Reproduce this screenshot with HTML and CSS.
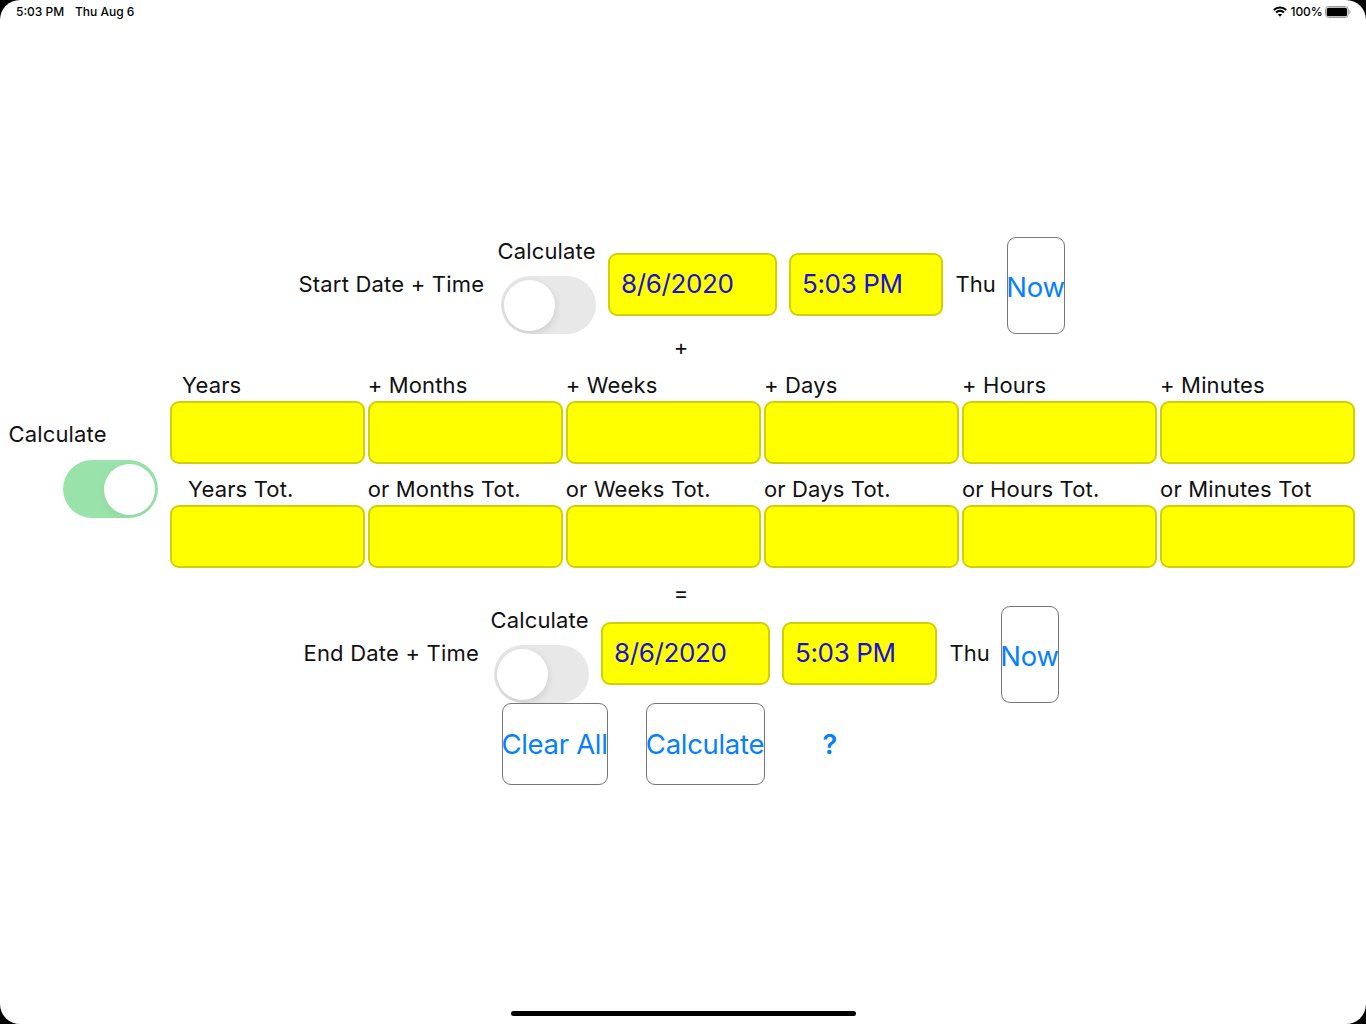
FILE: index.html
```html
<!DOCTYPE html>
<html lang="en">
<head>
<meta charset="utf-8">
<title>Date Calculator</title>
<link rel="stylesheet" href="styles.css">
</head>
<body>
<div class="screen">
  <header class="status">
    <span class="clock">5:03 PM</span>
    <span class="today">Thu Aug 6</span>
    <svg class="wifi" width="14" height="11" viewBox="0 0 14 11" fill="none" stroke="#000" stroke-width="2.1">
      <path d="M0.8 4.1C4.3 0.6 9.7 0.6 13.2 4.1"/>
      <path d="M3 6.5C5.3 4.3 8.7 4.3 11 6.5"/>
      <path d="M7 10.7L4.9 8.6C6.1 7.5 7.9 7.5 9.1 8.6Z" fill="#000" stroke="none"/>
    </svg>
    <span class="percent">100%</span>
    <svg class="battery" width="27" height="12" viewBox="0 0 27 12">
      <rect x="0.5" y="0.5" width="22.8" height="11" rx="3.2" fill="none" stroke="#999"/>
      <rect x="1.7" y="1.7" width="20.4" height="8.6" rx="1.9"/>
      <path d="M24.3 4.1C26 4.7 26 7.3 24.3 7.9Z" fill="#999"/>
    </svg>
  </header>

  <main class="calculator">
    <section class="date-row start">
      <span class="label caption">Start Date + Time</span>
      <div class="switch-group">
        <span class="label calc">Calculate</span>
        <div class="switch"><div class="knob"></div></div>
      </div>
      <div class="field date"><span>8/6/2020</span></div>
      <div class="field time"><span>5:03 PM</span></div>
      <span class="label weekday">Thu</span>
      <div class="button now"><span>Now</span></div>
    </section>

    <div class="label operator plus">+</div>

    <section class="duration">
      <div class="mode">
        <span class="label calc">Calculate</span>
        <div class="switch on"><div class="knob"></div></div>
      </div>
      <div class="units">
        <span class="label unit years">Years</span>
        <span class="label unit">+ Months</span>
        <span class="label unit">+ Weeks</span>
        <span class="label unit">+ Days</span>
        <span class="label unit">+ Hours</span>
        <span class="label unit">+ Minutes</span>
        <div class="field"></div><div class="field"></div><div class="field"></div>
        <div class="field"></div><div class="field"></div><div class="field"></div>
        <span class="label unit years-total">Years Tot.</span>
        <span class="label unit">or Months Tot.</span>
        <span class="label unit">or Weeks Tot.</span>
        <span class="label unit">or Days Tot.</span>
        <span class="label unit">or Hours Tot.</span>
        <span class="label unit">or Minutes Tot</span>
        <div class="field"></div><div class="field"></div><div class="field"></div>
        <div class="field"></div><div class="field"></div><div class="field"></div>
      </div>
    </section>

    <div class="label operator equals">=</div>

    <section class="date-row end">
      <span class="label caption">End Date + Time</span>
      <div class="switch-group">
        <span class="label calc">Calculate</span>
        <div class="switch"><div class="knob"></div></div>
      </div>
      <div class="field date"><span>8/6/2020</span></div>
      <div class="field time"><span>5:03 PM</span></div>
      <span class="label weekday">Thu</span>
      <div class="button now"><span>Now</span></div>
    </section>

    <section class="actions">
      <div class="button clear"><span>Clear All</span></div>
      <div class="button calculate"><span>Calculate</span></div>
      <span class="help">?</span>
    </section>
  </main>
  <div class="home-bar"></div>
</div>
</body>
</html>
```
FILE: styles.css
```css
* { box-sizing: border-box; }
body {
  margin: 0;
  background: #000;
  font-family: Inter, "Liberation Sans", sans-serif;
  color: #111;
}
.screen {
  width: 1366px;
  height: 1024px;
  border-radius: 20px;
  background: #fff;
  display: flex;
  flex-direction: column;
  overflow: hidden;
}
.status {
  height: 24px;
  padding: 0 16px 1px;
  display: flex;
  align-items: center;
  font-size: 12px;
  font-weight: 500;
  color: #000;
  white-space: nowrap;
}
.clock { width: 59px; }
.wifi { margin-left: auto; }
.percent { width: 32px; margin: 0 2px 0 4px; letter-spacing: -0.1px; }
.battery { margin-right: -1.5px; }

.calculator { padding-top: 213px; flex: 1; }
.label {
  font-size: 22px;
  line-height: 30px;
  letter-spacing: 0.15px;
  white-space: nowrap;
}
.field {
  height: 63px;
  border: 2px solid #d0d008;
  border-radius: 9px;
  background: #ff0;
  color: #1a10dc;
  font-size: 26px;
  letter-spacing: -0.35px;
  display: flex;
  align-items: center;
  white-space: nowrap;
}
.button {
  border: 1px solid #777;
  border-radius: 9px;
  color: #087fff;
  font-size: 27.5px;
  letter-spacing: -0.3px;
  display: flex;
  align-items: center;
  justify-content: center;
  white-space: nowrap;
}
.switch {
  width: 95px;
  height: 58px;
  border-radius: 29px;
  padding: 3px;
  background: #e8e8e8;
  display: flex;
  align-items: center;
  overflow: hidden;
}
.switch.on { background: #99e2a9; justify-content: flex-end; }
.knob {
  width: 51px;
  height: 51px;
  border-radius: 50%;
  background: #fff;
  box-shadow: 0 3px 9px rgba(0, 0, 0, 0.12);
}
.on .knob { box-shadow: 0 3px 9px rgba(0, 0, 0, 0.05); }

.date-row { display: flex; align-items: center; height: 97px; padding-bottom: 2px; }
.date-row.start { padding-left: 298.5px; }
.date-row.end { padding-left: 303.5px; }
.caption { width: 199px; margin-top: -1px; letter-spacing: 0.2px; }
.end .caption { width: 187px; }
.switch-group {
  width: 98.5px;
  height: 97px;
  margin-bottom: -2px;
  display: flex;
  flex-direction: column;
  align-items: flex-end;
  justify-content: space-between;
}
.switch-group .calc { width: 98.5px; margin-top: -1px; }
.date { width: 169px; margin-left: 12px; padding: 0 0 2px 11px; }
.time { width: 154px; margin-left: 12px; padding: 0 0 2px 11px; }
.end .time { width: 155px; }
.weekday { width: 51px; margin: -1px 0 0 12.5px; letter-spacing: 0; }
.now { width: 58px; height: 97px; margin-bottom: -2px; padding-top: 2px; }

.operator { width: 1362px; text-align: center; }
.plus { height: 38px; margin-top: -2px; }
.equals { height: 38px; padding-top: 10px; }

.duration { display: flex; height: 198px; }
.mode { width: 169.6px; padding: 49px 11.6px 0 8.5px; display: flex; flex-direction: column; }
.mode .switch { align-self: flex-end; margin-top: 11px; }
.units {
  display: grid;
  grid-template-columns: repeat(6, 195px);
  grid-template-rows: 31px 63px 41px 63px;
  column-gap: 3.1px;
}
.unit { align-self: end; padding-bottom: 1px; }
.years { padding-left: 12.5px; }
.years-total { padding-left: 18.5px; }

.actions { display: flex; height: 82px; padding-left: 501.5px; }
.clear { width: 106px; }
.calculate { width: 119px; margin-left: 38px; }
.help {
  margin-left: 58px;
  align-self: center;
  color: #087fff;
  font-size: 27px;
  font-weight: 600;
}
.home-bar {
  width: 345px;
  height: 5px;
  border-radius: 3px;
  background: #000;
  margin: 0 auto 8px;
}
```
